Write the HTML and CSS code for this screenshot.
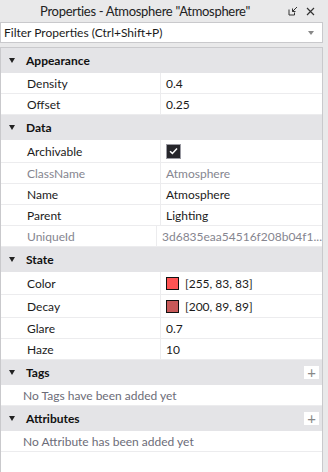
FILE: index.html
```html
<!DOCTYPE html>
<html lang="en">
<head>
<meta charset="UTF-8">
<meta name="viewport" content="width=device-width, initial-scale=1.0">
<title>Properties</title>
<link rel="stylesheet" href="styles.css">
</head>
<body>

<div class="titlebar">
    <div class="title">Properties - Atmosphere "Atmosphere"</div>
    <div class="title-icons">
        <svg width="10" height="10" viewBox="0 0 10 10"><path d="M1 3.5 V9 H6.5 V6.5" fill="none" stroke="#333" stroke-width="1"/><path d="M9 1 L4.5 5.5 M4.5 2.5 V5.5 H7.5" fill="none" stroke="#333" stroke-width="1"/></svg>
        <svg width="9" height="9" viewBox="0 0 9 9"><path d="M1 1 L8 8 M8 1 L1 8" stroke="#333" stroke-width="1.2"/></svg>
    </div>
</div>

<div class="filter">
    <span>Filter Properties (Ctrl+Shift+P)</span>
    <span class="drop"></span>
</div>

<div class="panel">
    <div class="section"><span class="arrow"></span>Appearance</div>
    <div class="row"><div class="name">Density</div><div class="value">0.4</div></div>
    <div class="row"><div class="name">Offset</div><div class="value">0.25</div></div>

    <div class="section"><span class="arrow"></span>Data</div>
    <div class="row tall"><div class="name">Archivable</div><div class="value"><span class="check"><svg width="9" height="8" viewBox="0 0 9 8"><path d="M1 4.2 L3.4 6.4 L8 1.5" fill="none" stroke="#fff" stroke-width="1.5"/></svg></span></div></div>
    <div class="row dim"><div class="name">ClassName</div><div class="value">Atmosphere</div></div>
    <div class="row"><div class="name">Name</div><div class="value">Atmosphere</div></div>
    <div class="row"><div class="name">Parent</div><div class="value">Lighting</div></div>
    <div class="row dim"><div class="name">UniqueId</div><div class="value">3d6835eaa54516f208b04f1...</div></div>

    <div class="section"><span class="arrow"></span>State</div>
    <div class="row tall"><div class="name">Color</div><div class="value"><span class="swatch red"></span>[255, 83, 83]</div></div>
    <div class="row tall"><div class="name">Decay</div><div class="value"><span class="swatch brown"></span>[200, 89, 89]</div></div>
    <div class="row"><div class="name">Glare</div><div class="value">0.7</div></div>
    <div class="row"><div class="name">Haze</div><div class="value">10</div></div>

    <div class="section"><span class="arrow"></span>Tags<span class="plus">+</span></div>
    <div class="empty">No Tags have been added yet</div>

    <div class="section"><span class="arrow"></span>Attributes<span class="plus">+</span></div>
    <div class="empty">No Attribute has been added yet</div>
</div>

</body>
</html>
```

FILE: styles.css
```css
body {
    margin: 0;
    height: 472px;
    background-color: #e9e9ea;
    font-family: Lato, "Open Sans", sans-serif;
    font-size: 12px;
    color: #1b1b1b;
    display: flex;
    flex-direction: column;
    overflow: hidden;
}
.titlebar {
    height: 22px;
    display: flex;
    align-items: center;
}
.title {
    flex: 1;
    text-align: center;
    font-size: 13px;
    letter-spacing: -0.3px;
    color: #222;
    padding-left: 2px;
}
.title-icons {
    width: 40px;
    display: flex;
    align-items: center;
    gap: 8px;
}
.filter {
    height: 19px;
    margin-right: 5px;
    background: #fff;
    border: 1px solid #c9c9cc;
    display: flex;
    align-items: center;
    justify-content: space-between;
    padding-left: 3px;
    padding-right: 8px;
    font-size: 12px;
    color: #1b1b1b;
}
.drop {
    width: 0;
    height: 0;
    border-left: 3.5px solid transparent;
    border-right: 3.5px solid transparent;
    border-top: 4px solid #888;
}
.panel {
    flex: 1;
    margin-top: 4px;
    margin-right: 5px;
    background: #fff;
    border: 1px solid #c9c9cc;
    border-bottom: none;
}
.section {
    height: 25px;
    background: #e4e4e7;
    display: flex;
    align-items: center;
    font-weight: bold;
    font-size: 12px;
    color: #111;
    padding-left: 8px;
}
.arrow {
    width: 0;
    height: 0;
    border-left: 3.5px solid transparent;
    border-right: 3.5px solid transparent;
    border-top: 5px solid #222;
    margin-right: 11px;
}
.plus {
    margin-left: auto;
    margin-right: 3px;
    width: 15px;
    height: 13px;
    background: #fff;
    color: #888;
    font-weight: normal;
    font-size: 15px;
    line-height: 12px;
    text-align: center;
}
.row {
    height: 21px;
    box-sizing: border-box;
    border-bottom: 1px solid #ececee;
    display: flex;
}
.row.tall {
    height: 23px;
}
.name {
    width: 160px;
    padding-left: 26px;
    box-sizing: border-box;
    border-right: 1px solid #ececee;
    display: flex;
    align-items: center;
}
.value {
    flex: 1;
    padding-left: 5px;
    display: flex;
    align-items: center;
}
.dim {
    color: #85858f;
}
.check {
    width: 13px;
    height: 13px;
    background: #26262b;
    border: 1px solid #9a9aa2;
    display: flex;
    align-items: center;
    justify-content: center;
}
.swatch {
    width: 11px;
    height: 11px;
    border: 1px solid #111;
    margin-right: 6px;
}
.red {
    background: #ff5353;
}
.brown {
    background: #c85959;
}
.empty {
    height: 21px;
    box-sizing: border-box;
    border-bottom: 1px solid #ececee;
    display: flex;
    align-items: center;
    padding-left: 22px;
    color: #6c6c78;
}
```
